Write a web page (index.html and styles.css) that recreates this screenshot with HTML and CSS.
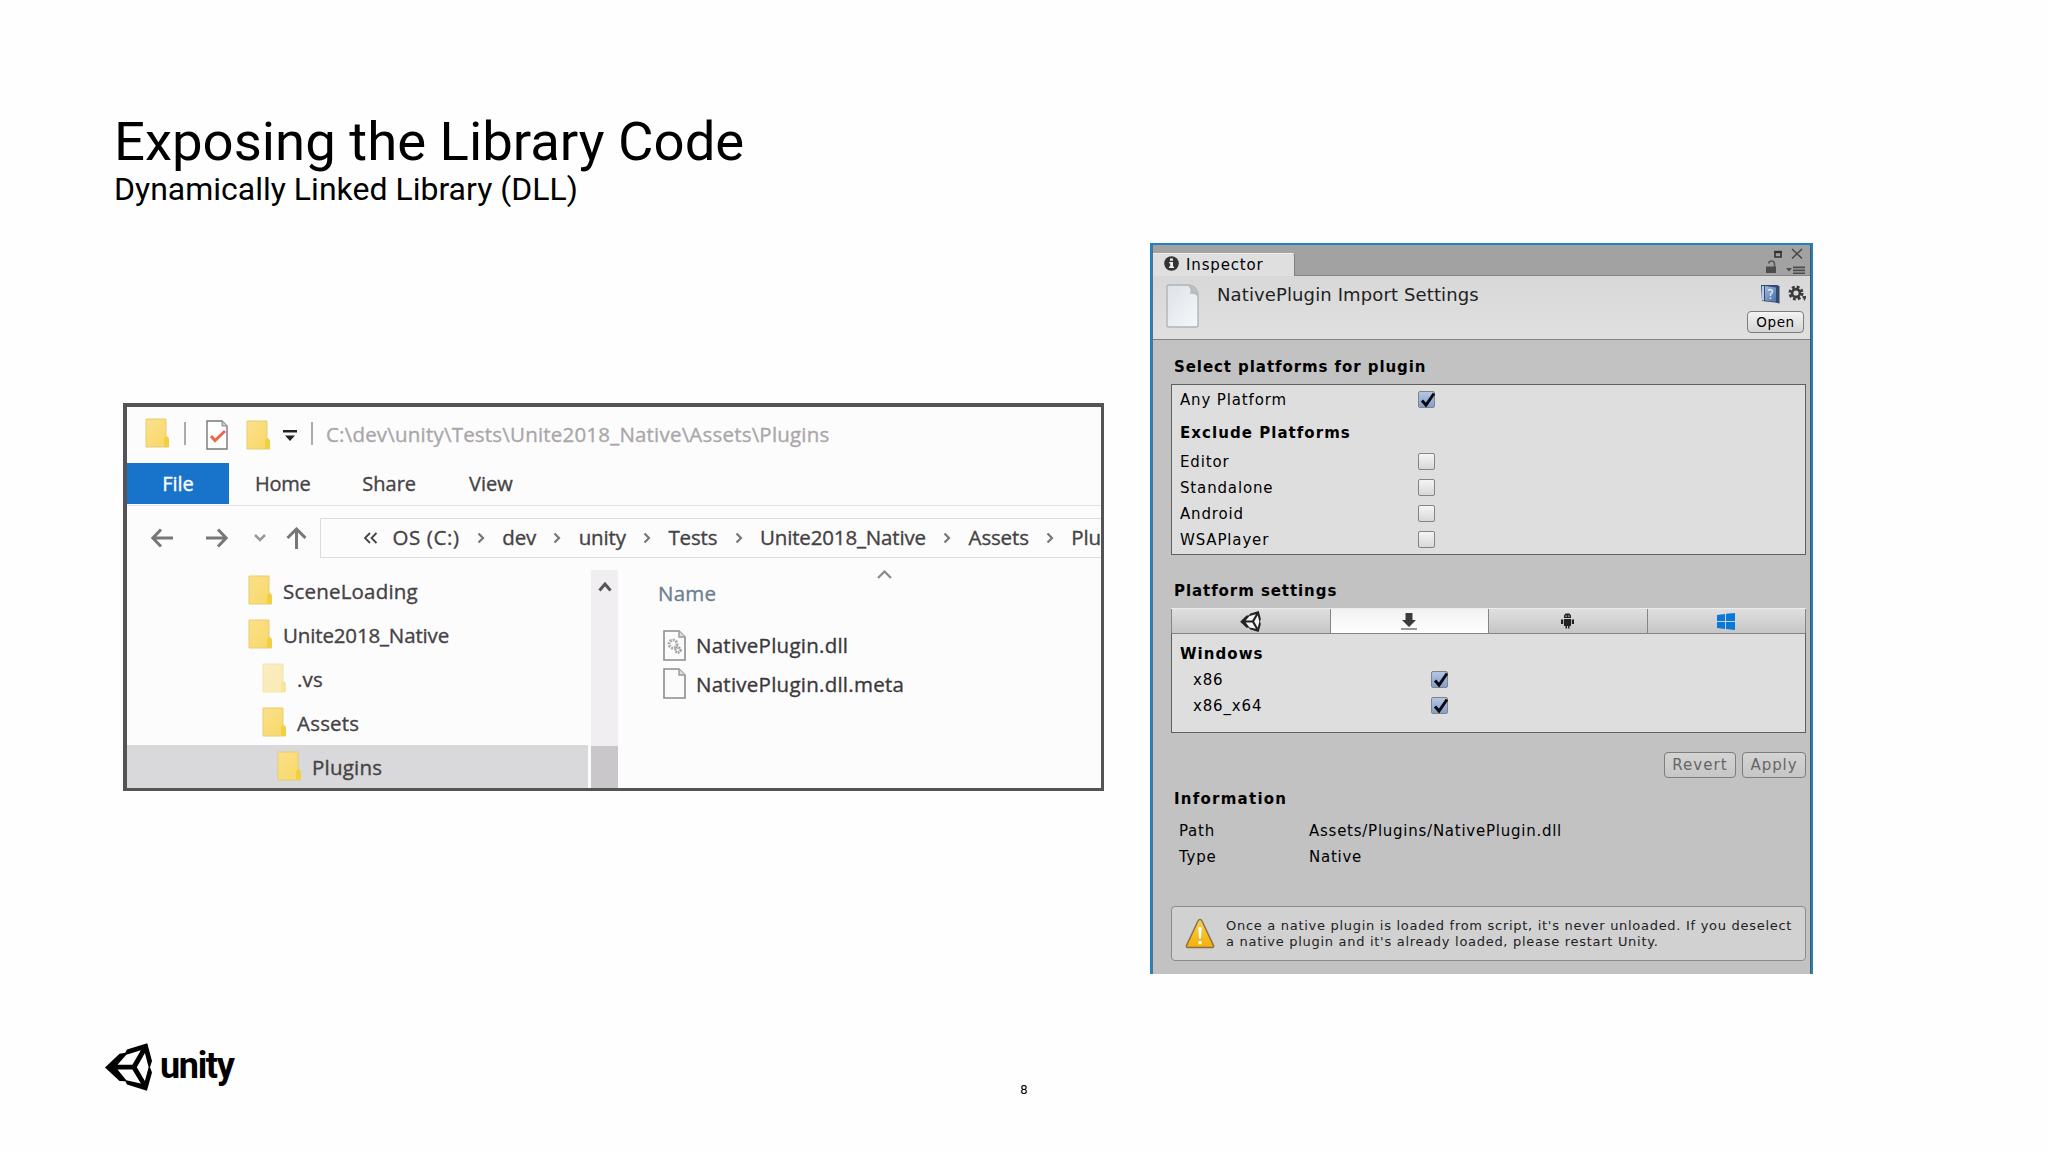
FILE: index.html
```html
<!DOCTYPE html>
<html lang="en">
<head>
    <meta charset="UTF-8">
    <title>Exposing the Library Code</title>
    <link rel="stylesheet" href="styles.css">
</head>
<body>
    <!-- shared icons -->
    <svg width="0" height="0" class="defs">
        <linearGradient id="folderFill" x1="0" y1="0" x2="1" y2="1">
            <stop offset="0" stop-color="#fbe08a"/>
            <stop offset="1" stop-color="#f8d867"/>
        </linearGradient>
        <linearGradient id="pageFill" x1="0" y1="0" x2="1" y2="1">
            <stop offset="0" stop-color="#dde2e8"/>
            <stop offset="1" stop-color="#f6f8f9"/>
        </linearGradient>
        <linearGradient id="warnFill" x1="0" y1="0" x2="0" y2="1">
            <stop offset="0" stop-color="#f7d34a"/>
            <stop offset="1" stop-color="#f5ae08"/>
        </linearGradient>
        <linearGradient id="bookFill" x1="0" y1="0" x2="1" y2="1">
            <stop offset="0" stop-color="#9dbce0"/>
            <stop offset="1" stop-color="#4a6fa8"/>
        </linearGradient>
        <symbol id="folder" viewBox="0 0 24 31">
            <path d="M1 1H21V18L23.5 20V29H1Z" fill="url(#folderFill)" stroke="#e6cd72" stroke-width="1"/>
            <path d="M19 29V20L21 18L23.5 20V29Z" fill="#f3d03c"/>
        </symbol>
        <symbol id="chevron" viewBox="0 0 8 12">
            <path d="M1.5 1.5L6 6L1.5 10.5" fill="none" stroke="#777" stroke-width="2.2"/>
        </symbol>
        <symbol id="page" viewBox="0 0 23 31">
            <path d="M1 1H16L22 7V30H1Z" fill="#fcfbfc" stroke="#8d8b8e" stroke-width="1.6"/>
            <path d="M16 1V7H22" fill="#ddd" stroke="#9a989b" stroke-width="1.4"/>
        </symbol>
        <symbol id="cube" viewBox="45 70 139 141">
            <path fill-rule="evenodd" d="M45 142L88 101L105 98L110 89L170 70L184 123L178 141L184 157L169 211L110 192L105 183L88 182ZM82 134H126L151 91L108 104ZM82 148L108 180L151 189L126 148ZM139 141L163 182L174 141L163 99Z"/>
        </symbol>
    </svg>

    <div class="slide">
        <header class="heading">
            <h1>Exposing the Library Code</h1>
            <h2>Dynamically Linked Library (DLL)</h2>
        </header>

        <main class="content">
            <!-- Windows explorer -->
            <section class="explorer">
                <div class="titlebar">
                    <svg class="folder"><use href="#folder"/></svg>
                    <span class="sep"></span>
                    <svg class="check-page" viewBox="0 0 22 30">
                        <path d="M1 1H16L21 6V29H1Z" fill="#fff" stroke="#777" stroke-width="1.4"/>
                        <path d="M16 1V6H21" fill="#ccc" stroke="#888"/>
                        <path d="M5 16L9 20.5L19 11" fill="none" stroke="#e8694a" stroke-width="3"/>
                    </svg>
                    <svg class="folder second"><use href="#folder"/></svg>
                    <svg class="quick" viewBox="0 0 14 12"><path d="M0 0H14V2.400H0ZM2 5.500H12L7 11Z" fill="#222"/></svg>
                    <span class="sep last"></span>
                    <span class="path">C:\dev\unity\Tests\Unite2018_Native\Assets\Plugins</span>
                </div>
                <nav class="tabs">
                    <span class="tab file">File</span>
                    <span class="tab home">Home</span>
                    <span class="tab share">Share</span>
                    <span class="tab">View</span>
                </nav>
                <div class="address">
                    <div class="arrows">
                        <svg width="22" height="20" viewBox="0 0 22 20"><path d="M22 10H2M10 1.5L1.8 10L10 18.5"/></svg>
                        <svg class="fwd" width="22" height="20" viewBox="0 0 22 20"><path d="M0 10H20M12 1.5L20.2 10L12 18.5"/></svg>
                        <svg class="recent" width="12" height="8" viewBox="0 0 12 8"><path d="M1 1L6 6L11 1"/></svg>
                        <svg class="up" width="21" height="22" viewBox="0 0 21 22"><path d="M10.5 22V2M1.5 11L10.5 2L19.5 11"/></svg>
                    </div>
                    <div class="crumbs">
                        <svg class="more" viewBox="0 0 15 12"><path d="M7 1L2 6L7 11M13.5 1L8.5 6L13.5 11" fill="none" stroke="#444" stroke-width="1.8"/></svg>
                        <span class="os">OS (C:)</span>
                        <svg class="chev"><use href="#chevron"/></svg>
                        <span>dev</span>
                        <svg class="chev"><use href="#chevron"/></svg>
                        <span>unity</span>
                        <svg class="chev"><use href="#chevron"/></svg>
                        <span>Tests</span>
                        <svg class="chev"><use href="#chevron"/></svg>
                        <span>Unite2018_Native</span>
                        <svg class="chev"><use href="#chevron"/></svg>
                        <span>Assets</span>
                        <svg class="chev"><use href="#chevron"/></svg>
                        <span>Plu</span>
                    </div>
                </div>
                <div class="panes">
                    <ul class="tree">
                        <li><svg class="folder"><use href="#folder"/></svg>SceneLoading</li>
                        <li class="tight"><svg class="folder"><use href="#folder"/></svg>Unite2018_Native</li>
                        <li class="level2"><svg class="folder faded"><use href="#folder"/></svg>.vs</li>
                        <li class="level2"><svg class="folder"><use href="#folder"/></svg>Assets</li>
                        <li class="level3 selected"><svg class="folder"><use href="#folder"/></svg>Plugins</li>
                    </ul>
                    <div class="scrollbar">
                        <svg width="14" height="11" viewBox="0 0 14 11"><path d="M1.5 9.5L7 3L12.5 9.5" fill="none" stroke="#555" stroke-width="3"/></svg>
                        <div class="thumb"></div>
                    </div>
                    <div class="files">
                        <svg class="sort" width="15" height="9" viewBox="0 0 15 9"><path d="M1 8L7.5 1.5L14 8" fill="none" stroke="#8a8a8a" stroke-width="2.2"/></svg>
                        <div class="column-name">Name</div>
                        <div class="file-row">
                            <svg class="page" viewBox="0 0 23 31">
                                <use href="#page" width="23" height="31"/>
                                <circle cx="10" cy="14" r="4" fill="none" stroke="#aaa" stroke-width="3" stroke-dasharray="2 1"/>
                                <circle cx="15" cy="20" r="2.5" fill="none" stroke="#999" stroke-width="2.4" stroke-dasharray="1.6 .8"/>
                            </svg>
                            NativePlugin.dll
                        </div>
                        <div class="file-row">
                            <svg class="page"><use href="#page"/></svg>
                            NativePlugin.dll.meta
                        </div>
                    </div>
                </div>
            </section>

            <!-- Unity inspector -->
            <section class="inspector">
                <div class="strip">
                    <div class="strip-tab">
                        <svg width="15" height="15" viewBox="0 0 15 15"><circle cx="7.5" cy="7.5" r="7.3" fill="#333"/><path d="M6 2.5H9V4.8H6ZM5.2 6H9V10.5H10V12H5V10.5H6.2V7.4H5.2Z" fill="#eee"/></svg>
                        Inspector
                    </div>
                    <svg class="window-icons" width="42" height="28" viewBox="0 0 42 28">
                        <path d="M11 4H17V9H11Z" fill="none" stroke="#333" stroke-width="1.6"/>
                        <path d="M10.2 4H17.8" stroke="#333" stroke-width="2.4"/>
                        <path d="M28 1L38 10.500M38 1L28 10.500" stroke="#444" stroke-width="1.4"/>
                        <path d="M2 18.500H12V25H2Z" fill="#4c4c4c"/>
                        <path d="M4.500 15.500Q5 13 7.500 13Q10.500 13 10.500 16V19" fill="none" stroke="#555" stroke-width="1.5"/>
                        <path d="M22 20H28L25 23.5ZM29 18.5H41V20.3H29ZM29 21.6H41V23.2H29ZM29 24.5H41V26.1H29Z" fill="#4c4c4c"/>
                    </svg>
                </div>
                <div class="asset">
                    <svg class="asset-icon" viewBox="0 0 33 44">
                        <path d="M2.5 1H22Q32 2 32 13V41Q32 43 30 43H2.5Q1 43 1 41V3Q1 1 2.5 1Z" fill="url(#pageFill)" stroke="#b0b4b8" stroke-width="1.4"/>
                        <path d="M21 1Q26 4 24 10Q30 9 32 14Q31 3 21 1Z" fill="#b4bfbd"/>
                    </svg>
                    <div class="asset-name">NativePlugin Import Settings</div>
                    <div class="asset-tools">
                        <svg width="46" height="20" viewBox="0 0 46 20">
                            <path d="M1 1H17L19.500 2V19.500L15 18.500L2 17Z" fill="#34496d"/>
                            <path d="M2 2H4V17L2 16Z" fill="#b9cce4"/>
                            <path d="M5 2L16 3.500V18L5 16.500Z" fill="url(#bookFill)"/>
                            <path d="M8.500 7Q8.500 5.500 10.500 5.500Q12.500 5.800 12.500 7.800Q12.500 9 10.500 10V12M10.500 13.500V15" fill="none" stroke="#dfe9f5" stroke-width="1.4"/>
                            <circle cx="36" cy="9" r="6" fill="none" stroke="#3a3a3a" stroke-width="3" stroke-dasharray="2.700 2.012"/>
                            <circle cx="36" cy="9" r="3.900" fill="none" stroke="#3a3a3a" stroke-width="2.600"/>
                            <path d="M42.500 12H46.500V14H46L44.500 17L43 14H42.500Z" fill="#444"/>
                        </svg>
                        <button class="btn open">Open</button>
                    </div>
                </div>

                <div class="settings">
                    <h3>Select platforms for plugin</h3>
                    <div class="group platforms">
                        <div class="row"><span class="label">Any Platform</span><span class="box on"><svg viewBox="0 0 19 18"><path d="M4 9.500L8 14L16 2.500"/></svg></span></div>
                        <div class="row sub">Exclude Platforms</div>
                        <div class="row"><span class="label">Editor</span><span class="box"></span></div>
                        <div class="row"><span class="label">Standalone</span><span class="box"></span></div>
                        <div class="row"><span class="label">Android</span><span class="box"></span></div>
                        <div class="row"><span class="label">WSAPlayer</span><span class="box"></span></div>
                    </div>

                    <h3 class="second-heading">Platform settings</h3>
                    <div class="platform-tabs">
                        <div><svg class="cube-small" viewBox="0 0 21 21"><path d="M2 10.500L8 4L19 1V20L8 17Z" fill="#f4f4f4"/><use href="#cube" width="21" height="21" fill="#222"/></svg></div>
                        <div class="active"><svg width="16" height="17" viewBox="0 0 16 17"><path d="M4.500 0H11.500V7H15L8 14L1 7H4.500Z" fill="#3c3c3c"/><path d="M0 16H16" stroke="#555" stroke-width="1.200"/></svg></div>
                        <div><svg width="13" height="16" viewBox="0 0 13 16"><path d="M3 5V2.500L4.500 .500H8.500L10 2.500V5ZM3 6H10V13H8.500V15.500H7V13H6V15.500H4.500V13H3ZM0 6.500H2.200V11H0ZM10.800 6.500H13V11H10.800Z" fill="#222"/><path d="M4.500 2.500H5.700V3.700H4.500ZM7.300 2.500H8.500V3.700H7.300Z" fill="#ddd"/></svg></div>
                        <div><svg width="18" height="17" viewBox="0 0 18 17"><path d="M0 2L8 1V8H0ZM9 .800L18 0V8H9ZM0 9H8V16L0 15ZM9 9H18V17L9 16.100Z" fill="#0a78d8"/></svg></div>
                    </div>
                    <div class="group windows">
                        <div class="row sub">Windows</div>
                        <div class="row indent"><span class="label">x86</span><span class="box on"><svg viewBox="0 0 19 18"><path d="M4 9.500L8 14L16 2.500"/></svg></span></div>
                        <div class="row indent"><span class="label">x86_x64</span><span class="box on"><svg viewBox="0 0 19 18"><path d="M4 9.500L8 14L16 2.500"/></svg></span></div>
                    </div>

                    <div class="actions">
                        <button class="btn revert">Revert</button>
                        <button class="btn apply">Apply</button>
                    </div>

                    <h3 class="info-heading">Information</h3>
                    <div class="info">
                        <div class="row"><span class="key">Path</span><span>Assets/Plugins/NativePlugin.dll</span></div>
                        <div class="row"><span class="key">Type</span><span>Native</span></div>
                    </div>

                    <div class="warning">
                        <svg width="30" height="31" viewBox="0 0 30 31">
                            <path d="M15 1.500Q16.200 1.500 17 3L28.500 27.500Q29 29.500 27 29.500H3Q1 29.500 1.500 27.500L13 3Q13.800 1.500 15 1.500Z" fill="url(#warnFill)" stroke="#85714a" stroke-width="1.500"/>
                            <path d="M13.300 9H16.700L16 20.500H14ZM13.500 23H16.500V26.200H13.500Z" fill="#fff"/>
                        </svg>
                        <p>Once a native plugin is loaded from script, it's never unloaded. If you deselect<br>a native plugin and it's already loaded, please restart Unity.</p>
                    </div>
                </div>
            </section>
        </main>

        <footer class="footer">
            <div class="logo">
                <svg width="47" height="48"><use href="#cube"/></svg>
                <span>unity</span>
            </div>
            <span class="page-number">8</span>
        </footer>
    </div>
</body>
</html>
```
FILE: styles.css
```css
* {
    box-sizing: border-box;
}

body {
    margin: 0;
    background: #fefefe;
    color: #000;
}

h1, h2, h3, p, ul {
    margin: 0;
    padding: 0;
    font-weight: 400;
}

svg {
    display: block;
    flex: none;
}

.defs {
    position: absolute;
}

.slide {
    width: 2048px;
    height: 1152px;
    padding-top: 112px;
    overflow: hidden;
}

.heading {
    height: 131px;
    padding-left: 114px;
    font-family: Roboto, sans-serif;
}

.heading h1 {
    font-size: 54.5px;
    line-height: 58px;
}

.heading h2 {
    font-size: 32px;
    line-height: 38px;
}

.content {
    display: flex;
    align-items: flex-start;
    gap: 46px;
    padding-left: 123px;
}

/* explorer window */
.explorer {
    width: 981px;
    height: 388px;
    margin-top: 160px;
    border: 4px solid #555356;
    border-right-width: 3px;
    border-bottom-width: 3px;
    background: #fdfcfd;
    overflow: hidden;
    font-family: "Open Sans", sans-serif;
    font-size: 20.5px;
    color: #444244;
    -webkit-text-stroke: .35px;
    white-space: nowrap;
}

.folder {
    width: 24px;
    height: 31px;
}

.faded {
    opacity: .5;
}

.titlebar {
    display: flex;
    align-items: center;
    height: 56px;
    padding: 0 0 3px 18px;
}

.sep {
    width: 2px;
    height: 23px;
    margin: 0 20px 0 15px;
    background: #aaa;
}

.sep.last {
    margin: 0 13px 0 14px;
}

.check-page {
    width: 22px;
    height: 30px;
    margin-top: 3px;
}

.folder.second {
    margin: 3px 13px 0 18px;
}

.quick {
    width: 14px;
    height: 12px;
    margin-top: 4px;
}

.path {
    color: #a9a7a9;
    letter-spacing: .2px;
}

.tabs {
    display: flex;
    height: 42px;
    line-height: 42px;
    font-size: 20px;
}

.file {
    width: 102px;
    height: 41px;
    margin-right: 26px;
    background: #1874cb;
    color: #fff;
    text-align: center;
}

.home {
    margin-right: 52px;
    letter-spacing: -.3px;
}

.share {
    margin-right: 53px;
}

.address {
    display: flex;
    align-items: flex-start;
    padding-top: 12px;
    border-top: 1px solid #e2e0e2;
}

.arrows {
    display: flex;
    align-items: center;
    width: 194px;
    height: 40px;
    padding-left: 24px;
}

.arrows path {
    fill: none;
    stroke: #777;
    stroke-width: 3;
}

.arrows .recent path {
    stroke: #999;
    stroke-width: 2.5;
}

.fwd {
    margin-left: 33px;
}

.recent {
    margin: 0 20px 0 26px;
}

.crumbs {
    display: flex;
    align-items: center;
    flex: 1;
    gap: 17.3px;
    height: 40px;
    padding-left: 42px;
    border: 1px solid #dddbdd;
    border-right: 0;
    line-height: 36px;
    letter-spacing: -.15px;
}

.crumbs span {
    padding-bottom: 2px;
}

.more {
    width: 15px;
    height: 12px;
    margin-right: -3px;
}

.crumbs .os {
    letter-spacing: .6px;
}

.chev {
    width: 8px;
    height: 12px;
}

.panes {
    display: flex;
    height: 230px;
}

.tree {
    width: 461px;
    padding-top: 11px;
    list-style: none;
    letter-spacing: .2px;
}

.tree li {
    display: flex;
    align-items: center;
    gap: 11px;
    height: 43.9px;
    padding-left: 121px;
}

.tree .tight {
    letter-spacing: -.15px;
}

.tree .level2 {
    padding-left: 135px;
}

.tree .level3 {
    padding-left: 150px;
}

.tree .selected {
    background: #d9d8da;
}

.scrollbar {
    display: flex;
    flex-direction: column;
    align-items: center;
    width: 27px;
    margin: 12px 0 0 3px;
    padding-top: 11px;
    background: #f0eef1;
}

.thumb {
    width: 27px;
    height: 60px;
    margin-top: 154px;
    background: #c9c7ca;
    flex: none;
}

.files {
    padding: 12px 0 0 40px;
    letter-spacing: .25px;
}

.sort {
    margin-left: 219px;
}

.column-name {
    height: 47px;
    padding-top: 2px;
    line-height: 24px;
    color: #6c7f90;
}

.file-row {
    display: flex;
    align-items: center;
    gap: 10px;
    height: 38.5px;
    padding-left: 5px;
    color: #3b383b;
}

.page {
    width: 23px;
    height: 31px;
}

/* inspector window */
.inspector {
    width: 663px;
    height: 731px;
    border: solid #2382bc;
    border-width: 2px 2px 0 2px;
    box-shadow: inset -1px 0 #555, inset 1px 0 #54728a;
    background: #c2c2c3;
    font-family: "DejaVu Sans", sans-serif;
    font-size: 15px;
    line-height: 26px;
    letter-spacing: .85px;
    white-space: nowrap;
}

.strip {
    display: flex;
    justify-content: space-between;
    align-items: flex-end;
    height: 31px;
    margin: 0 1px;
    background: #a2a2a2;
    border-bottom: 1px solid #858585;
}

.strip-tab {
    display: flex;
    align-items: center;
    gap: 7px;
    width: 142px;
    height: 23px;
    margin-bottom: -1px;
    padding-left: 11px;
    background: #dfdfe0;
    border-top: 1px solid #eee;
    border-right: 1px solid #808080;
    border-radius: 0 3px 0 0;
    line-height: 22px;
}

.strip-tab svg {
    margin-bottom: 3px;
}

.window-icons {
    align-self: flex-start;
    margin: 3px 4px 0 0;
}

.asset {
    display: flex;
    height: 64px;
    margin: 0 1px;
    padding: 8px 4px 0 13px;
    background: linear-gradient(#d8d8d9, #e0e0e1);
    border-bottom: 1px solid #828283;
}

.asset-icon {
    width: 33px;
    height: 44px;
}

.asset-name {
    flex: 1;
    margin: -2px 0 0 18px;
    font-size: 18px;
    letter-spacing: .12px;
    color: #222;
}

.asset-tools {
    display: flex;
    flex-direction: column;
    align-items: flex-end;
    gap: 7px;
}

.btn {
    padding: 0;
    border: 1px solid #7d7d7e;
    border-radius: 4px;
    background: linear-gradient(#f4f4f4, #d4d4d5);
    font: 15px "DejaVu Sans", sans-serif;
    letter-spacing: 1.1px;
}

.open {
    width: 57px;
    height: 22px;
    margin-right: 2px;
    font-size: 13.5px;
    letter-spacing: .6px;
}

.settings {
    padding: 14px 5px 0 19px;
}

h3 {
    margin: 0 0 4px 3px;
    font-size: 15px;
    font-weight: 700;
    letter-spacing: .93px;
}

.group {
    border: 1px solid #5f5f60;
    background: #dededf;
    padding-left: 8px;
}

.platforms {
    height: 171px;
    padding-top: 2px;
}

.row {
    display: flex;
    align-items: center;
    height: 26px;
}

.sub {
    font-weight: 700;
    letter-spacing: 1.05px;
}

.platforms .sub {
    margin: 7px 0 3px;
}

.indent {
    padding-left: 13px;
}

.label {
    width: 238px;
}

.box {
    width: 17px;
    height: 17px;
    margin-bottom: 1px;
    border: 1px solid #848485;
    border-radius: 2px;
    background: linear-gradient(#f5f5f5, #d8d8d9);
}

.box.on {
    background: linear-gradient(#b4c6e2, #839fd0);
}

.box svg {
    width: 19px;
    height: 18px;
    margin: -1px;
}

.box path {
    fill: none;
    stroke: #0c0c10;
    stroke-width: 3;
}

.second-heading {
    margin-top: 23px;
}

.platform-tabs {
    display: flex;
    height: 25px;
    border-top: 1px solid #ececec;
}

.platform-tabs div {
    display: flex;
    flex: 1;
    align-items: center;
    justify-content: center;
    background: linear-gradient(#dfdfe0, #c6c6c7);
    border-right: 1px solid #858585;
}

.platform-tabs div:first-child {
    border-left: 1px solid #858585;
}

.platform-tabs .active {
    background: linear-gradient(#f2f2f2, #fff);
}

.cube-small {
    width: 21px;
    height: 21px;
}

.windows {
    height: 100px;
    padding-top: 7px;
    border-top-color: #858585;
}

.actions {
    display: flex;
    justify-content: flex-end;
    gap: 6px;
    padding: 19px 0 8px;
}

.revert, .apply {
    width: 72px;
    height: 26px;
    background: linear-gradient(#d4d4d5, #c6c6c7);
    color: #666;
}

.apply {
    width: 64px;
    letter-spacing: .9px;
}

.info-heading {
    letter-spacing: 1.25px;
}

.info {
    margin: 6px 0 36px;
    padding-left: 8px;
    letter-spacing: .75px;
}

.key {
    width: 130px;
}

.warning {
    display: flex;
    align-items: center;
    height: 55px;
    padding-left: 13px;
    border: 1px solid #8b8b8c;
    border-radius: 4px;
    background: #d1d1d2;
}

.warning p {
    margin-left: 11px;
    font-size: 13px;
    line-height: 16px;
    letter-spacing: .71px;
    color: #222;
}

/* footer */
.footer {
    display: grid;
    grid-template-columns: 1fr auto 1fr;
    padding: 69px 105px 0;
}

.logo {
    display: flex;
    align-items: flex-start;
    gap: 8px;
    font: 700 36px/48px Roboto, sans-serif;
    letter-spacing: -1.35px;
}

.logo span {
    margin-top: -1px;
}

.page-number {
    padding-top: 38px;
    font: 13px/18px Roboto, sans-serif;
}
```
